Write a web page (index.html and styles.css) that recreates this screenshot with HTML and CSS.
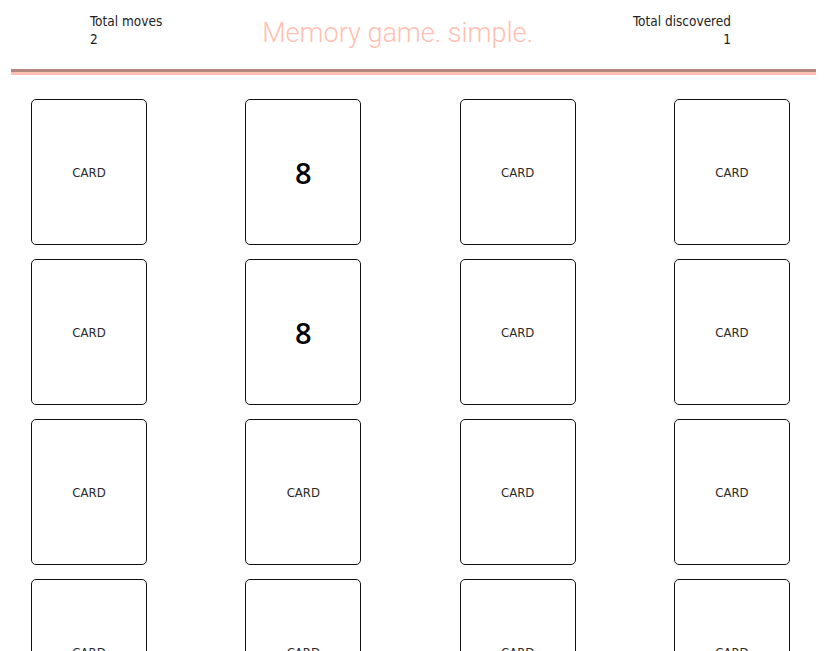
FILE: index.html
```html
<!DOCTYPE html>
<html>
<head>
<meta charset="utf-8">
<link rel="stylesheet" href="styles.css">
</head>
<body>
<header class="top">
  <div class="stat">
    <div>Total moves</div>
    <div>2</div>
  </div>
  <h1 class="title">Memory game. simple.</h1>
  <div class="stat stat-right">
    <div>Total discovered</div>
    <div>1</div>
  </div>
</header>
<div class="rule"></div>
<main class="board">
  <div class="card">CARD</div>
  <div class="card open">8</div>
  <div class="card">CARD</div>
  <div class="card">CARD</div>
  <div class="card">CARD</div>
  <div class="card open">8</div>
  <div class="card">CARD</div>
  <div class="card">CARD</div>
  <div class="card">CARD</div>
  <div class="card">CARD</div>
  <div class="card">CARD</div>
  <div class="card">CARD</div>
  <div class="card">CARD</div>
  <div class="card">CARD</div>
  <div class="card">CARD</div>
  <div class="card">CARD</div>
</main>
</body>
</html>
```
FILE: styles.css
```css
html, body {
  margin: 0;
  padding: 0;
  background: #fff;
}
body {
  font-family: "DejaVu Sans Condensed", "Liberation Sans", sans-serif;
  color: #222;
}
.top {
  display: flex;
  justify-content: space-between;
  align-items: flex-start;
  padding: 12px 105px 0 90px;
  height: 57px;
  box-sizing: border-box;
}
.stat {
  font-size: 13.5px;
  line-height: 18px;
}
.stat-right {
  text-align: right;
}
.title {
  margin: 5px 0 0 0;
  font-family: Roboto, "DejaVu Sans Condensed", sans-serif;
  font-weight: 300;
  font-size: 27px;
  line-height: 32px;
  color: #ffbfb1;
}
.rule {
  margin: 12px 20px 0 11px;
  height: 0;
  border-top: 3px solid #b3877f;
  border-bottom: 3px solid #ffbeb2;
}
.board {
  display: grid;
  grid-template-columns: repeat(4, 116px);
  justify-content: space-between;
  row-gap: 14px;
  padding: 24px 46px 40px 31px;
}
.card {
  width: 116px;
  height: 146px;
  box-sizing: border-box;
  border: 1px solid #111;
  border-radius: 5px;
  display: flex;
  align-items: center;
  justify-content: center;
  font-size: 13px;
  color: #2a2a2a;
}
.card.open {
  font-family: "Open Sans", "Noto Sans", sans-serif;
  font-weight: 600;
  font-size: 29px;
  color: #000;
}
```
